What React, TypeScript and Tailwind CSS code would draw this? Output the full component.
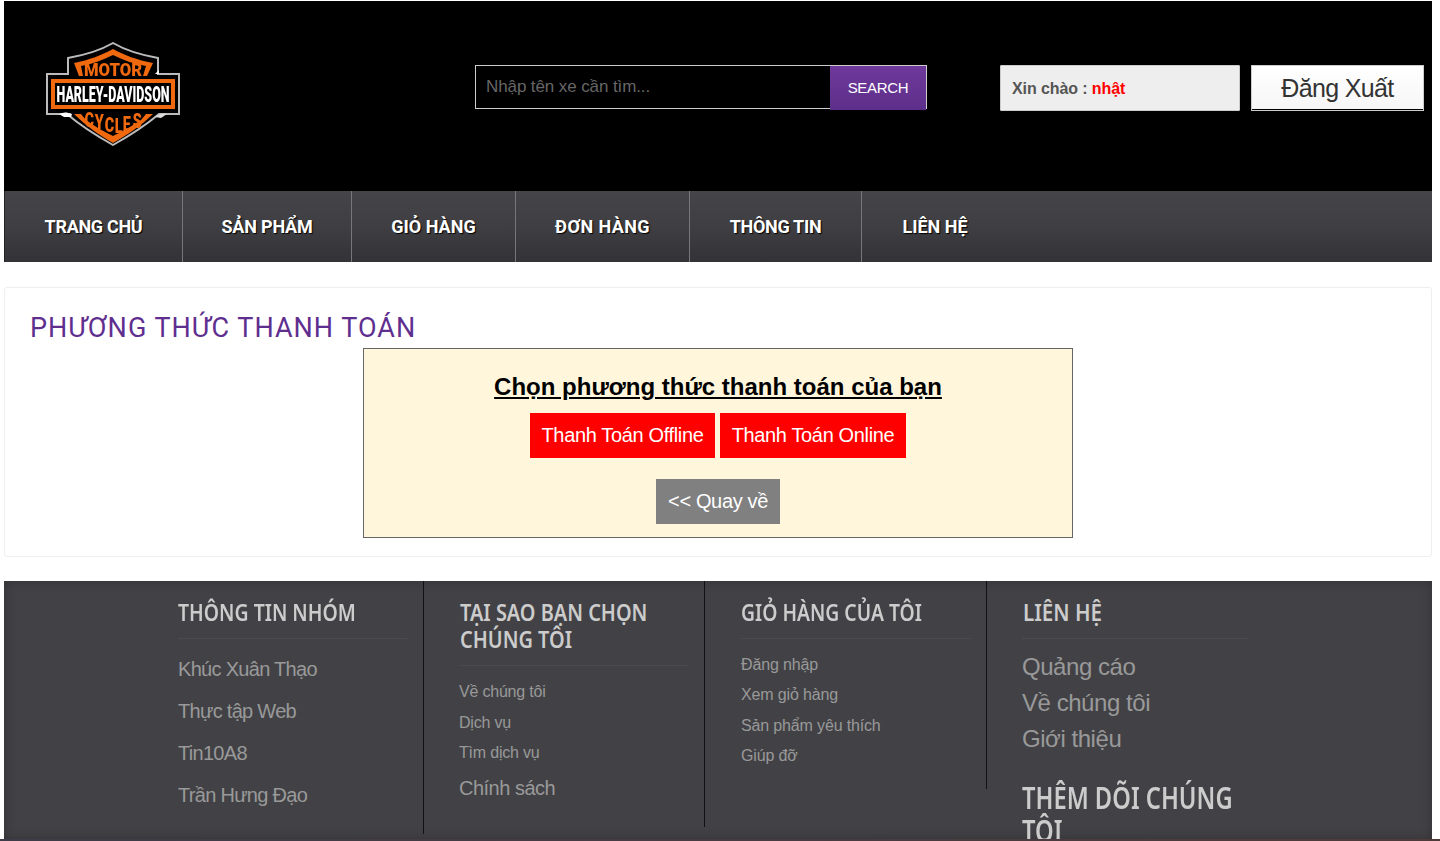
const sans = "font-['Liberation_Sans',Arial,sans-serif]";
const head = "font-['Roboto',sans-serif]";
const noto = "font-['Noto_Sans',sans-serif]";
const orange = "#f0690f";

function Logo() {
  return (
    <svg width="136" height="106" viewBox="0 0 136 106" className="block blur-[0.4px]">
      <path d="M23 32 L23 16 C40 13 56 8 68 1 C80 8 96 13 113 16 L113 32 L134 32 L134 72 L114 72 C100 84 84 94 68 103 C52 94 36 84 22 72 L2 72 L2 32 Z" fill="#000" stroke="#bbb" strokeWidth="2" />
      <path d="M29 21 C44 18 57 13 68 7 C79 13 92 18 108 21 L102 34 L98 34 L101 24 C89 22 78 18 68 13 C58 18 47 22 36 24 L38 34 L34 34 Z" fill={orange} />
      <path d="M29 72 L36 72 L41 78 C49 84 58 89 68 94 C78 89 87 84 96 78 L101 72 L108 72 C96 84 82 93 68 101 C54 93 41 84 29 72 Z" fill={orange} />
      <rect x="6" y="37" width="124" height="30" fill={orange} />
      <rect x="10" y="41" width="116" height="22" fill="#000" />
      <path d="M14 72 C18 70 22 70 27 72 L26 75 L19 75 Z" fill="#fff" />
      <path d="M110 75 C114 72 118 71 122 72 L116 76 Z" fill="#ddd" />
      <path d="M110 32 L114 28 L114 32 Z" fill="#fff" />
      <text transform="translate(68,34) scale(1,1.4)" textAnchor="middle" textLength="58" lengthAdjust="spacingAndGlyphs" fontFamily="Roboto, sans-serif" fontWeight="900" fontSize="13" fill={orange}>MOTOR</text>
      <text transform="translate(68,60) scale(1,1.57)" textAnchor="middle" textLength="113" lengthAdjust="spacingAndGlyphs" fontFamily="Roboto, sans-serif" fontWeight="900" fontSize="14" fill="#fff">HARLEY-DAVIDSON</text>
      <text transform="scale(0.72,1)" x="55 69 83 97 108 122" y="85 87 90 91 89 86" fontFamily="Roboto, sans-serif" fontWeight="900" fontSize="20" fill={orange}>CYCLES</text>
    </svg>
  );
}

const navItems: [string, string, string, string][] = [
  ["TRANG CHỦ", "w-[178px]", "border-[#222]", "tracking-[-0.3px]"],
  ["SẢN PHẨM", "w-[169px]", "border-[#777]", "tracking-[-0.2px]"],
  ["GIỎ HÀNG", "w-[164px]", "border-[#777]", "tracking-[0px]"],
  ["ĐƠN HÀNG", "w-[174px]", "border-[#777]", "tracking-[0.4px]"],
  ["THÔNG TIN", "w-[172px]", "border-[#777]", "tracking-[-0.3px]"],
  ["LIÊN HỆ", "w-[147px]", "border-[#777]", "tracking-[0px]"],
];

function FooterHead({ lines, scale }: { lines: string[]; scale: string }) {
  return (
    <h3 className={`${noto} text-[24px] leading-[27px] font-semibold whitespace-nowrap text-[#ccc] pb-[13px] border-b border-[#4a4a4f]`}>
      {lines.map((l) => (
        <span key={l} className={`block origin-left ${scale}`}>{l}</span>
      ))}
    </h3>
  );
}

export default function App() {
  return (
    <div className={`${sans} bg-white pt-px pl-1 pr-2 h-[841px] overflow-hidden relative`}>
      <header className="h-[190px] bg-black flex items-start">
        <div className="w-[471px] pl-[41px] pt-[41px]"><Logo /></div>
        <div className="mt-[64px] w-[452px] h-[44px] border border-[#ccc] flex">
          <div className="flex-1 pl-[10px] pt-[11px] text-[17px] tracking-[-0.1px] leading-[20px] text-[#666]">Nhập tên xe cần tìm...</div>
          <div className="w-[96px] h-[44px] -mb-px bg-gradient-to-b from-[#6f399b] to-[#5d2f8a] text-white text-[15px] tracking-[-0.3px] flex items-center justify-center">SEARCH</div>
        </div>
        <div className="ml-[73px] mt-[64px] w-[240px] h-[46px] bg-[#eee] border border-[#ccc] rounded-[1px] flex items-center pl-[11px] pt-px text-[16px] tracking-[-0.1px] font-bold text-[#555]">
          Xin chào :&nbsp;<span className="text-[#f00]">nhật</span>
        </div>
        <div className="ml-[11px] mt-[64px] w-[173px] h-[46px] bg-gradient-to-b from-white to-[#f6f6f6] border border-[#ccc]">
          <div className="h-full pt-[2px] border-b border-black text-[25px] tracking-[-0.65px] text-[#333] flex items-center justify-center">
            Đăng Xuất
          </div>
        </div>
      </header>
      <nav className="h-[71px] bg-gradient-to-b from-[#444449] via-[#3f3f43] to-[#333337] flex">
        {navItems.map(([t, w, b, s]) => (
          <div key={t} className={`${w} ${b} ${s} ${head} border-l flex items-center justify-center text-[18px] font-bold text-white [text-shadow:1px_1px_1px_#000]`}>{t}</div>
        ))}
      </nav>
      <main className="mt-[25px] h-[270px] border border-[#eee] rounded-[3px] pl-[25px] pt-[21px]">
        <h2 className={`${head} text-[27px] leading-[38px] mb-px tracking-[1px] text-[#5f2f90]`}>PHƯƠNG THỨC THANH TOÁN</h2>
        <div className="ml-[333px] w-[710px] h-[190px] border border-[#666] bg-[#fff6dc] flex flex-col items-center pt-[23px]">
          <h3 className="text-[24px] leading-[30px] font-bold underline text-black">Chọn phương thức thanh toán của bạn</h3>
          <div className="mt-[11px] flex gap-[5px]">
            <div className="h-[45px] w-[185px] pb-[2px] bg-[#f00] text-white text-[20px] tracking-[-0.35px] flex items-center justify-center">Thanh Toán Offline</div>
            <div className="h-[45px] w-[186px] pb-[2px] bg-[#f00] text-white text-[20px] tracking-[-0.35px] flex items-center justify-center">Thanh Toán Online</div>
          </div>
          <div className="mt-[21px] h-[45px] w-[124px] pb-[2px] bg-[#808080] text-white text-[20px] tracking-[-0.35px] flex items-center justify-center">&lt;&lt; Quay về</div>
        </div>
      </main>
      <footer className="mt-[24px] h-[258px] bg-[#424246] shadow-[inset_0_0_12px_rgba(0,0,0,0.25)] flex pl-[159px] items-start">
        <div className="w-[261px] h-[253px] pl-[15px] pr-[16px] pt-[17px] border-r border-[#111]">
          <FooterHead lines={["THÔNG TIN NHÓM"]} scale="scale-x-[0.81]" />
          <ul className="mt-[9px] text-[20px] tracking-[-0.7px] leading-[42px] text-[#999]">
            <li>Khúc Xuân Thạo</li><li>Thực tập Web</li><li>Tin10A8</li><li>Trần Hưng Đạo</li>
          </ul>
        </div>
        <div className="w-[281px] h-[246px] pl-[35px] pr-[16px] pt-[17px] border-r border-[#111]">
          <FooterHead lines={["TẠI SAO BẠN CHỌN", "CHÚNG TÔI"]} scale="scale-x-[0.83] translate-x-px" />
          <ul className="mt-[11px] text-[16px] tracking-[-0.2px] leading-[30.5px] text-[#999]">
            <li>Về chúng tôi</li><li>Dịch vụ</li><li>Tìm dịch vụ</li>
            <li className="text-[20px] tracking-[-0.5px] leading-[38px]">Chính sách</li>
          </ul>
        </div>
        <div className="w-[282px] h-[208px] pl-[36px] pr-[15px] pt-[17px] border-r border-[#111]">
          <FooterHead lines={["GIỎ HÀNG CỦA TÔI"]} scale="scale-x-[0.805]" />
          <ul className="mt-[11px] text-[16px] tracking-[-0.15px] leading-[30.4px] text-[#999]">
            <li>Đăng nhập</li><li>Xem giỏ hàng</li><li>Sản phẩm yêu thích</li><li>Giúp đỡ</li>
          </ul>
        </div>
        <div className="w-[262px] pl-[35px] pt-[17px] pr-[1px]">
          <FooterHead lines={["LIÊN HỆ"]} scale="scale-x-[0.857] translate-x-px" />
          <ul className="mt-[10px] text-[24px] tracking-[-0.45px] leading-[36px] text-[#999]">
            <li>Quảng cáo</li><li>Về chúng tôi</li><li>Giới thiệu</li>
          </ul>
          <h3 className={`${noto} mt-[24px] text-[31px] leading-[33px] font-semibold whitespace-nowrap text-[#ccc]`}>
            <span className="block origin-left scale-x-[0.765]">THÊM DÕI CHÚNG</span>
            <span className="block origin-left scale-x-[0.765]">TÔI</span>
          </h3>
        </div>
      </footer>
      <div className="absolute left-0 right-0 bottom-0 h-[2px] bg-gradient-to-r from-[#3e3c48] to-[#4f3a3a]" />
    </div>
  );
}
